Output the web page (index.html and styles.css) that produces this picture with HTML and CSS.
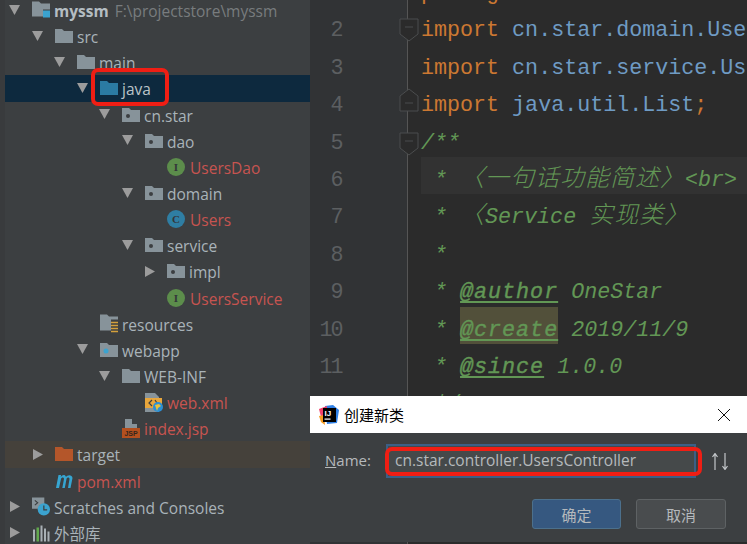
FILE: index.html
```html
<!DOCTYPE html>
<html lang="zh">
<head>
<meta charset="utf-8">
<title>创建新类</title>
<link rel="stylesheet" href="styles.css">
</head>
<body>
<svg class="defs" width="0" height="0" aria-hidden="true">
  <defs>
    <symbol id="folder" viewBox="0 0 18 14"><path d="M0 0H7L9 2H18V14H0Z"/></symbol>
    <symbol id="down" viewBox="0 0 12 11"><path d="M0 0H11L5.500 10Z" fill="#9c9c9c"/></symbol>
    <symbol id="right" viewBox="0 0 12 11"><path d="M1 0L11 5.500L1 11Z" fill="#9c9c9c"/></symbol>
  </defs>
</svg>
<main class="app">
  <aside class="tree">
    <div class="row d0"><svg class="arrow"><use href="#down"/></svg><svg class="ico tall" viewBox="0 0 18 18"><path d="M0 0H7L9 2H18V8H11V15H0Z" fill="#87939a"/><rect x="11" y="9" width="7" height="7" fill="#3ba3cf"/></svg><b class="strong">myssm</b><span class="path">F:\projectstore\myssm</span></div>
    <div class="row d1"><svg class="arrow"><use href="#down"/></svg><svg class="ico fold"><use href="#folder"/></svg><span>src</span></div>
    <div class="row d2"><svg class="arrow"><use href="#down"/></svg><svg class="ico fold"><use href="#folder"/></svg><span>main</span></div>
    <div class="row d3 selected"><svg class="arrow"><use href="#down"/></svg><svg class="ico fold blue"><use href="#folder"/></svg><span>java</span></div>
    <div class="row d4"><svg class="arrow"><use href="#down"/></svg><svg class="ico pkg" viewBox="0 0 18 14"><path d="M0 0H7L9 2H18V14H0Z" fill="#87939a"/><circle cx="6" cy="8" r="2" fill="#3c3f41"/></svg><span>cn.star</span></div>
    <div class="row d5"><svg class="arrow"><use href="#down"/></svg><svg class="ico pkg" viewBox="0 0 18 14"><path d="M0 0H7L9 2H18V14H0Z" fill="#87939a"/><circle cx="6" cy="8" r="2" fill="#3c3f41"/></svg><span>dao</span></div>
    <div class="row d6"><i class="badge green">I</i><span class="changed">UsersDao</span></div>
    <div class="row d5"><svg class="arrow"><use href="#down"/></svg><svg class="ico pkg" viewBox="0 0 18 14"><path d="M0 0H7L9 2H18V14H0Z" fill="#87939a"/><circle cx="6" cy="8" r="2" fill="#3c3f41"/></svg><span>domain</span></div>
    <div class="row d6"><i class="badge teal">C</i><span class="changed">Users</span></div>
    <div class="row d5"><svg class="arrow"><use href="#down"/></svg><svg class="ico pkg" viewBox="0 0 18 14"><path d="M0 0H7L9 2H18V14H0Z" fill="#87939a"/><circle cx="6" cy="8" r="2" fill="#3c3f41"/></svg><span>service</span></div>
    <div class="row d6 hasarrow"><svg class="arrow"><use href="#right"/></svg><svg class="ico pkg" viewBox="0 0 18 14"><path d="M0 0H7L9 2H18V14H0Z" fill="#87939a"/><circle cx="6" cy="8" r="2" fill="#3c3f41"/></svg><span>impl</span></div>
    <div class="row d6"><i class="badge green">I</i><span class="changed">UsersService</span></div>
    <div class="row d4 noarrow"><svg class="ico tall" viewBox="0 0 18 18"><path d="M0 0H7L9 2H18V5H11V16H0Z" fill="#87939a"/><path d="M11 8H18M11 11H18M11 14H18M11 17H18" stroke="#d3a03c" stroke-width="1.600"/></svg><span>resources</span></div>
    <div class="row d3"><svg class="arrow"><use href="#down"/></svg><svg class="ico pkg" viewBox="0 0 18 14"><path d="M0 0H7L9 2H18V14H0Z" fill="#87939a"/><circle cx="6" cy="8" r="2.500" fill="#3ba3cf"/></svg><span>webapp</span></div>
    <div class="row d4"><svg class="arrow"><use href="#down"/></svg><svg class="ico fold"><use href="#folder"/></svg><span>WEB-INF</span></div>
    <div class="row d6 noarrow-xml"><svg class="ico tall" viewBox="0 0 18 19"><path d="M0 0H10L14 4V19H0Z" fill="#87939a"/><rect y="5" width="17" height="10" fill="#e8a63c"/><path d="M7 7L4 10L7 13M10 7L12 10" fill="none" stroke="#3c3f41" stroke-width="1.200"/><circle cx="13" cy="14" r="5" fill="#2a8fd6"/><path d="M10 12L14 11L16 13L13 15L12 18Z" fill="#e8c23c"/></svg><span class="changed">web.xml</span></div>
    <div class="row d5 noarrow-xml"><svg class="ico tall" viewBox="0 0 18 19"><path d="M3 0H10V5H15V9H3Z" fill="#87939a"/><rect y="9" width="18" height="10" fill="#b4501f"/><text x="9" y="17" class="jsp">JSP</text></svg><span class="changed">index.jsp</span></div>
    <div class="row d1 target"><svg class="arrow"><use href="#right"/></svg><svg class="ico fold orange"><use href="#folder"/></svg><span>target</span></div>
    <div class="row d1 noarrow"><svg class="ico pom" viewBox="0 0 18 14"><path d="M1 14L3.500 1H6L5.800 3C7 1 10 0 11 3C12 1 17 0 17.500 4L15.500 14H13L14.500 5C14.500 3 12 3 11.500 5L9.800 14H7.300L9 5C9 3 6.500 3 6 5L4 14Z" fill="#36a5d1"/></svg><span class="changed">pom.xml</span></div>
    <div class="row d0"><svg class="arrow"><use href="#right"/></svg><svg class="ico tall" viewBox="0 0 19 19"><path d="M0 0H13V8H8V12H0Z" fill="#87939a"/><path d="M3 3L6 5.500L3 8" fill="none" stroke="#3c3f41" stroke-width="1.200"/><circle cx="12.500" cy="12.500" r="6.500" fill="#3ba3cf"/><path d="M12.500 8.500V13H16" fill="none" stroke="#3c3f41" stroke-width="1.300"/></svg><span>Scratches and Consoles</span></div>
    <div class="row d0"><svg class="arrow"><use href="#right"/></svg><svg class="ico tall" viewBox="0 0 18 18"><path d="M1 6H3V18H1ZM8.500 2H10.500V18H8.500ZM12 5H14V18H12ZM15.500 8H17.500V18H15.500Z" fill="#a8b0b5"/><path d="M4.500 4H7V18H4.500Z" fill="#62a84e"/></svg><span>外部库</span></div>
  </aside>
  <section class="editor">
    <div class="gutter">
      <div class="num"></div><div class="num">2</div><div class="num">3</div><div class="num">4</div><div class="num">5</div><div class="num">6</div><div class="num">7</div><div class="num">8</div><div class="num">9</div><div class="num">10</div><div class="num">11</div>
    </div>
    <div class="code">
      <div class="line"><span class="kw">package</span></div>
      <div class="line"><span class="kw">import</span> <span class="pk">cn.star.domain.Use</span></div>
      <div class="line"><span class="kw">import</span> <span class="pk">cn.star.service.Us</span></div>
      <div class="line"><span class="kw">import</span> <span class="pk">java.util.List</span><span class="kw">;</span></div>
      <div class="line doc">/**</div>
      <div class="line doc current"> * <span class="cjk">〈一句话功能简述〉</span>&lt;br&gt;</div>
      <div class="line doc"> * <span class="cjk">〈</span>Service <span class="cjk">实现类〉</span></div>
      <div class="line doc"> *</div>
      <div class="line doc"> * <u class="tag">@author</u> OneStar</div>
      <div class="line doc"> * <u class="tag mark">@create</u> 2019/11/9</div>
      <div class="line doc"> * <u class="tag">@since</u> 1.0.0</div>
      <div class="line doc"> */</div>
    </div>
  </section>
</main>
<svg class="fold-mark m2" viewBox="0 0 20 24"><path d="M1 1H19V16L10 23L1 16Z" fill="#2b2b2b" stroke="#4b4d4e"/><path d="M6 9H14" stroke="#4b4d4e"/></svg>
<svg class="fold-mark m4" viewBox="0 0 20 24"><path d="M1 23H19V8L10 1L1 8Z" fill="#2b2b2b" stroke="#4b4d4e"/><path d="M6 15H14" stroke="#4b4d4e"/></svg>
<svg class="fold-mark m5" viewBox="0 0 20 24"><path d="M1 1H19V16L10 23L1 16Z" fill="#2b2b2b" stroke="#4b4d4e"/><path d="M6 9H14" stroke="#4b4d4e"/></svg>
<div class="callout callout-java"></div>
<section class="dialog">
  <header class="dialog-title">
    <svg class="logo" viewBox="0 0 20 20"><path d="M6 1L14 0L20 5L18 18L8 19Z" fill="#2f80e6"/><path d="M0 4L8 1L8 12L2 12Z" fill="#f0406a"/><path d="M0 11L5 10L6 20L2 17Z" fill="#f59b21"/><rect x="4" y="3" width="13" height="14" fill="#000"/><text x="5.500" y="10.500" class="logo-text">IJ</text><rect x="5.500" y="13.500" width="6" height="1.200" fill="#fff"/></svg>
    <span class="dialog-name">创建新类</span>
    <svg class="close" viewBox="0 0 12 12"><path d="M0 0L12 12M12 0L0 12" stroke="#111" stroke-width="1"/></svg>
  </header>
  <div class="dialog-body">
    <div class="field">
      <label class="field-label"><u>N</u>ame:</label>
      <div class="input">cn.star.controller.UsersController<span class="callout callout-input"></span></div>
      <svg class="sort" viewBox="0 0 16 17"><path d="M3 17V1M0.500 4L3 0.500L5.500 4M13 0V16M10.500 13L13 16.500L15.500 13" fill="none" stroke="#c3c7ca" stroke-width="1.200"/></svg>
    </div>
    <div class="actions">
      <button class="btn primary">确定</button>
      <button class="btn">取消</button>
    </div>
  </div>
</section>
</body>
</html>
```
FILE: styles.css
```css
* { box-sizing: border-box; }
html, body { margin: 0; height: 100%; }
body { width: 747px; height: 544px; overflow: hidden; position: relative; background: #2b2b2b; font-family: "Open Sans", "Noto Sans CJK SC", sans-serif; }
.defs { position: absolute; }
.app { display: flex; height: 544px; overflow: hidden; }

.tree { width: 310px; flex: none; height: 544px; background: #3c3f41; border-left: 5px solid #393b3d; color: #a9b3b9; font-size: 15.500px; overflow: hidden; }
.row { height: 26.15px; display: flex; align-items: center; white-space: nowrap; position: relative; top: -3px; }
.row span, .row b { line-height: 26px; position: relative; top: 1px; }
.d0 { padding-left: 4px; }
.d1 { padding-left: 27px; }
.d2 { padding-left: 49px; }
.d3 { padding-left: 72px; }
.d4 { padding-left: 94px; }
.d5 { padding-left: 117px; }
.d6 { padding-left: 162px; }
.d6.hasarrow { padding-left: 139px; }
.d4.noarrow { padding-left: 95px; }
.d1.noarrow { padding-left: 50px; }
.d6.noarrow-xml { padding-left: 140px; }
.d5.noarrow-xml { padding-left: 117px; }
.selected { background: #0d293e; color: #bbc4c9; }
.target { background: #45413b; }
.arrow { width: 12px; height: 11px; flex: none; margin-right: 11px; }
.ico { width: 18px; height: 14px; flex: none; margin-right: 4px; fill: #87939a; }
.ico.tall { height: 19px; }
.ico.pkg { fill: none; }
.blue { fill: #2b7ba3; }
.orange { fill: #b4562a; }
.badge { width: 18px; height: 18px; border-radius: 50%; flex: none; margin-right: 5px; display: flex; align-items: center; justify-content: center; font: bold 11px "Liberation Serif", serif; color: #33363a; }
.green { background: #5c8d4b; }
.teal { background: #2f7ea3; }
.changed { color: #c75450; }
.strong { color: #b4bdc2; font-weight: 700; margin-right: 6px; }
.path { color: #787c7e; }
.jsp { font: bold 7px "Liberation Sans", sans-serif; fill: #33261d; text-anchor: middle; }

.editor { flex: 1; display: flex; overflow: hidden; background: #2b2b2b; }
.gutter { width: 98px; flex: none; background: #313335; border-right: 1px solid #555; color: #5c5f61; font: 21.7px/47px "Liberation Mono", monospace; letter-spacing: -2px; margin-top: -30px; height: 600px; }
.num { height: 37.4px; width: 31.500px; text-align: right; }
.code { flex: 1; margin-top: -30px; padding-left: 13px; font: 21.7px/47px "Liberation Mono", "Noto Sans CJK SC", monospace; color: #a9b7c6; }
.line { height: 37.4px; white-space: pre; position: relative; z-index: 0; }
.kw { color: #cc7832; }
.pk { color: #6f9bc4; }
.doc { color: #629755; font-style: italic; }
.current { background: #323232; }
.cjk { font-family: "Noto Sans CJK SC", sans-serif; font-size: 24px; line-height: 1; letter-spacing: 1px; font-weight: 300; }
.tag { -webkit-text-stroke: 0.4px #629755; text-decoration: underline; text-underline-offset: 3px; letter-spacing: 1px; }
.mark { position: relative; }
.mark::before { content: ""; position: absolute; left: 0; right: 0; top: -11px; height: 37px; background: #52503a; z-index: -1; }

.fold-mark { position: absolute; left: 399px; width: 20px; height: 24px; }
.m2 { top: 18px; }
.m4 { top: 88px; }
.m5 { top: 132px; }

.callout { position: absolute; border: 4px solid #f01e14; border-radius: 7px; }
.callout-java { left: 91px; top: 68px; width: 78px; height: 38px; }

.dialog { position: absolute; left: 310px; top: 396px; width: 437px; height: 146px; background: #3c3f41; color: #b5b9bc; }
.dialog-title { height: 37px; background: #fff; display: flex; align-items: center; padding: 0 17px 0 9px; color: #000; }
.logo { width: 20px; height: 20px; flex: none; margin-right: 5px; }
.logo-text { font: bold 8px "Liberation Sans", sans-serif; fill: #fff; }
.dialog-name { flex: 1; font-size: 15px; }
.close { width: 12px; height: 12px; flex: none; }
.dialog-body { padding: 11px 18px 0 15px; }
.field { display: flex; align-items: center; height: 34px; }
.field-label { width: 61px; flex: none; font-size: 15px; color: #b5b9bc; position: relative; top: -1px; }
.input { position: relative; width: 310px; height: 34px; flex: none; background: #45494a; border: 2px solid #3b5f86; padding-left: 7px; font-size: 15.500px; line-height: 29px; color: #b5b9bc; white-space: nowrap; }
.callout-input { left: -3px; top: 1px; width: 317px; height: 29px; }
.sort { margin-left: 16px; width: 16px; height: 17px; flex: none; }
.actions { display: flex; justify-content: flex-end; gap: 15px; margin-top: 21px; padding-right: 3px; }
.btn { width: 90px; height: 30px; border-radius: 3px; border: 1px solid #5e6264; background: #494c4e; color: #b5b9bc; font: 15px "Noto Sans CJK SC", sans-serif; padding: 0; }
.primary { width: 89px; background: #365880; border-color: #4c708c; }
```
